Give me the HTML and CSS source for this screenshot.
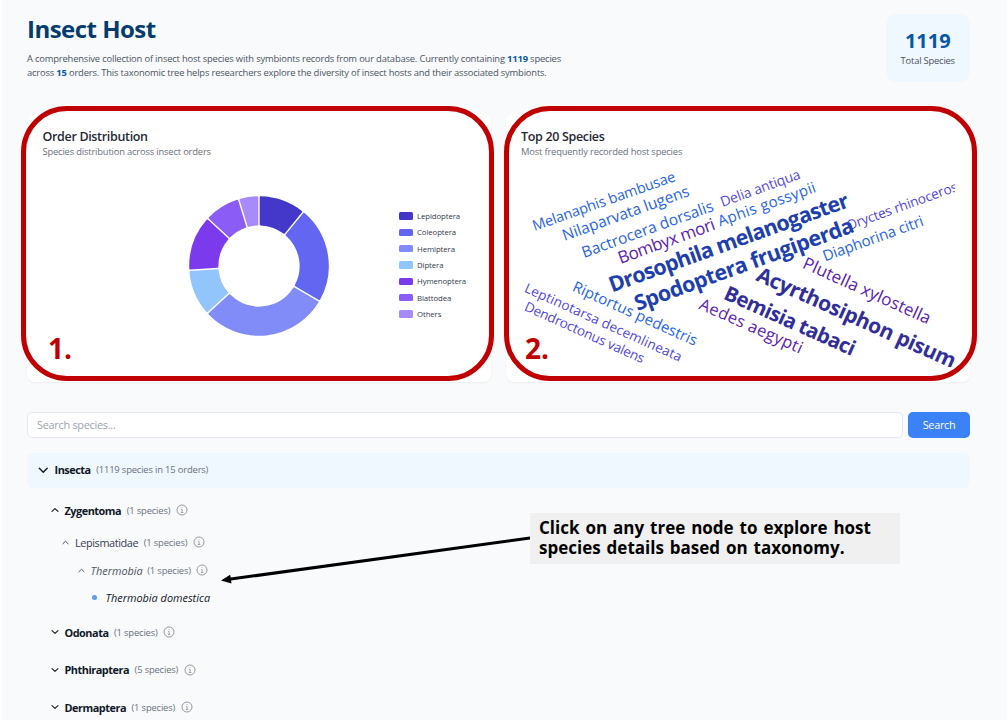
FILE: index.html
```html
<!DOCTYPE html>
<html lang="en">
<head>
<meta charset="utf-8">
<title>Insect Host</title>
<link rel="stylesheet" href="styles.css">
</head>
<body>
<svg class="defs" width="0" height="0">
  <symbol id="down" viewBox="0 0 12 12"><path d="M1.5 3.8 6 8.2l4.500-4.400" fill="none" stroke="currentColor" stroke-width="1.600" stroke-linecap="round" stroke-linejoin="round"/></symbol>
  <symbol id="up" viewBox="0 0 12 12"><path d="M1.5 8.200 6 3.800l4.500 4.400" fill="none" stroke="currentColor" stroke-width="1.600" stroke-linecap="round" stroke-linejoin="round"/></symbol>
  <symbol id="info" viewBox="0 0 12 12"><circle cx="6" cy="6" r="5" fill="none" stroke="currentColor" stroke-width=".9"/><path d="M5.200 5.300H6.100V8.500M4.900 8.500H7.300M5.700 3.500H6.400" fill="none" stroke="currentColor" stroke-width=".8"/></symbol>
</svg>
<main class="page">
  <header class="header">
    <div class="intro">
      <h1 class="title">Insect Host</h1>
      <p class="lead">A comprehensive collection of insect host species with symbionts records from our database. Currently containing <b>1119</b> species<br>across <b>15</b> orders. This taxonomic tree helps researchers explore the diversity of insect hosts and their associated symbionts.</p>
    </div>
    <div class="stat"><div class="stat-num">1119</div><div class="stat-label">Total Species</div></div>
  </header>

  <section class="cards">
    <article class="card">
      <h2 class="card-title">Order Distribution</h2>
      <p class="card-sub">Species distribution across insect orders</p>
      <div class="chart">
        <svg class="donut" id="donut" width="144" height="144" viewBox="-72 -72 144 144"></svg>
        <ul class="legend">
          <li><i class="c1"></i>Lepidoptera</li>
          <li><i class="c2"></i>Coleoptera</li>
          <li><i class="c3"></i>Hemiptera</li>
          <li><i class="c4"></i>Diptera</li>
          <li><i class="c5"></i>Hymenoptera</li>
          <li><i class="c6"></i>Blattodea</li>
          <li><i class="c7"></i>Others</li>
        </ul>
      </div>
    </article>
    <article class="card">
      <h2 class="card-title">Top 20 Species</h2>
      <p class="card-sub">Most frequently recorded host species</p>
      <svg class="cloud" width="434" height="205" viewBox="521.500 161.500 434 205">
        <g class="blue">
          <text transform="translate(535 230.500) rotate(-19.500)" font-size="14.500" textLength="150.500">Melanaphis bambusae</text>
          <text transform="translate(565 240.500) rotate(-19.900)" font-size="15.500" textLength="134">Nilaparvata lugens</text>
          <text transform="translate(584.500 257.500) rotate(-20)" font-size="15.500" textLength="139">Bactrocera dorsalis</text>
          <text transform="translate(720.500 226) rotate(-19.800)" font-size="15" textLength="103">Aphis gossypii</text>
          <text transform="translate(825.500 261) rotate(-20)" font-size="15" textLength="106">Diaphorina citri</text>
          <text transform="translate(572 290) rotate(24.300)" font-size="15" textLength="135">Riptortus pedestris</text>
        </g>
        <g class="indigo">
          <text transform="translate(723 206.500) rotate(-20)" font-size="14" textLength="84">Delia antiqua</text>
          <text transform="translate(849 230) rotate(-20)" font-size="13.500" textLength="117">Oryctes rhinoceros</text>
          <text transform="translate(524 291) rotate(24.300)" font-size="13.500" textLength="171">Leptinotarsa decemlineata</text>
          <text transform="translate(524 309.500) rotate(24.300)" font-size="13.500" textLength="130">Dendroctonus valens</text>
        </g>
        <g class="violet">
          <text transform="translate(621 263.500) rotate(-20)" font-size="17" textLength="102">Bombyx mori</text>
          <text transform="translate(802 267) rotate(24.300)" font-size="17" textLength="138.500">Plutella xylostella</text>
          <text transform="translate(698.500 308) rotate(24)" font-size="16.500" textLength="111.500">Aedes aegypti</text>
        </g>
        <g class="navy">
          <text transform="translate(612.500 292) rotate(-19.800)" font-size="21.500" textLength="253.500">Drosophila melanogaster</text>
          <text transform="translate(638 310.500) rotate(-20)" font-size="21.500" textLength="232">Spodoptera frugiperda</text>
        </g>
        <g class="deep">
          <text transform="translate(755.500 279.500) rotate(24.200)" font-size="21" textLength="216">Acyrthosiphon pisum</text>
          <text transform="translate(723 298) rotate(24)" font-size="20.500" textLength="141.500">Bemisia tabaci</text>
        </g>
      </svg>
    </article>
  </section>

  <form class="search"><input class="field" placeholder="Search species..."><button class="btn" type="button">Search</button></form>

  <section class="tree">
    <div class="row root"><svg class="chev"><use href="#down"/></svg><b>Insecta</b><span class="count">(1119 species in 15 orders)</span></div>
    <div class="row order zyg"><svg class="chev"><use href="#up"/></svg><b>Zygentoma</b><span class="count">(1 species)</span><svg class="info"><use href="#info"/></svg></div>
    <div class="row family"><svg class="chev"><use href="#up"/></svg><span class="name">Lepismatidae</span><span class="count">(1 species)</span><svg class="info"><use href="#info"/></svg></div>
    <div class="row genus"><svg class="chev"><use href="#up"/></svg><em>Thermobia</em><span class="count">(1 species)</span><svg class="info"><use href="#info"/></svg></div>
    <div class="row species"><i class="dot"></i><em>Thermobia domestica</em></div>
    <div class="row order first"><svg class="chev"><use href="#down"/></svg><b>Odonata</b><span class="count">(1 species)</span><svg class="info"><use href="#info"/></svg></div>
    <div class="row order"><svg class="chev"><use href="#down"/></svg><b>Phthiraptera</b><span class="count">(5 species)</span><svg class="info"><use href="#info"/></svg></div>
    <div class="row order"><svg class="chev"><use href="#down"/></svg><b>Dermaptera</b><span class="count">(1 species)</span><svg class="info"><use href="#info"/></svg></div>
  </section>
</main>

<div class="frame frame-1"><span class="mark">1.</span></div>
<div class="frame frame-2"><span class="mark">2.</span></div>
<svg class="arrow" width="312" height="56" viewBox="220 530 312 56"><path d="M530 538 229 579.300" stroke="#000" stroke-width="3"/><path d="M221 580.500 230.200 574.700 231.500 583.600Z"/></svg>
<div class="callout">Click on any tree node to explore host<br>species details based on taxonomy.</div>
<script src="donut.js"></script>
</body>
</html>
```

FILE: styles.css
```css
* { box-sizing: border-box; margin: 0; padding: 0; }
body { width: 1007px; height: 720px; overflow: hidden; position: relative; background: #fff; font-family: "Open Sans", "Noto Sans", sans-serif; color: #1f2937; }
.defs { position: absolute; }
.page { margin-left: 2px; height: 720px; overflow: hidden; background: #f9fafc; padding: 0 37px 0 25px; }

.header { display: flex; justify-content: space-between; height: 113px; }
.intro { padding-top: 11px; }
.title { font-size: 24px; line-height: 36px; font-weight: 700; letter-spacing: -.52px; color: #043c70; white-space: nowrap; }
.lead { margin-top: 5px; font-size: 9.400px; line-height: 14.300px; letter-spacing: -.175px; color: #4b5563; white-space: nowrap; }
.lead b { color: #075ba5; }
.stat { margin-top: 14px; width: 84.500px; height: 68px; border-radius: 9px; background: #eff7ff; text-align: center; padding-top: 14px; }
.stat-num { font-size: 20px; line-height: 26px; font-weight: 700; color: #0558a5; }
.stat-label { font-size: 9.400px; line-height: 13px; letter-spacing: -.2px; color: #4b5563; }

.cards { display: grid; grid-template-columns: 1fr 1fr; gap: 15px; height: 268.500px; }
.card { background: #fff; border-radius: 8px; padding: 15px 15px 0 15.500px; box-shadow: 0 1px 2px rgba(0,0,0,.05); }
.card-title { font-size: 12.500px; line-height: 17px; font-weight: 600; letter-spacing: -.33px; color: #1f2937; }
.card-sub { font-size: 9.400px; line-height: 14px; letter-spacing: -.18px; color: #6b7280; }
.chart { display: flex; justify-content: space-between; padding: 34.500px 0 0 144.300px; }
.donut { display: block; }
.legend { list-style: none; padding-top: 14.500px; width: 77px; }
.legend li { display: flex; align-items: center; gap: 4px; height: 16.300px; font-size: 7.800px; letter-spacing: -.1px; color: #333b4d; }
.legend i { width: 14.500px; height: 7.500px; border-radius: 1.500px; flex: none; }
.c1 { background: #4338ca; } .c2 { background: #6366f1; } .c3 { background: #818cf8; } .c4 { background: #93c5fd; }
.c5 { background: #7c3aed; } .c6 { background: #8b5cf6; } .c7 { background: #a78bfa; }
.cloud { display: block; margin-top: 3px; }
.blue { fill: #2563eb; } .indigo { fill: #4f46e5; } .violet { fill: #5b21b6; }
.navy { fill: #1e40af; font-weight: 700; } .deep { fill: #312e9b; font-weight: 700; }

.search { display: flex; gap: 5px; margin-top: 30px; height: 26.500px; }
.field { flex: 1; border: 1px solid #e5e7eb; border-radius: 5px; background: #fff; padding: 0 9px; font: 10.900px "Open Sans", sans-serif; letter-spacing: -.27px; }
.field::placeholder { color: #9ca3af; }
.btn { width: 62px; border: 0; border-radius: 5px; background: #3b82f6; color: #fff; font: 10.900px "Open Sans", sans-serif; letter-spacing: -.3px; }

.tree { margin-top: 15px; }
.row { display: flex; align-items: center; height: 37.600px; font-size: 10.900px; color: #111827; white-space: nowrap; }
.row b { font-weight: 700; letter-spacing: -.48px; }
.count { margin-left: 5.500px; font-size: 9.400px; letter-spacing: -.16px; color: #6b7280; }
.chev { flex: none; width: 8px; height: 8px; }
.info { flex: none; width: 12px; height: 12px; margin-left: 5.500px; color: #8a91a0; }
.root { height: 34.500px; padding: 0 0 1px 11px; border-radius: 5px; background: #eff7ff; }
.root .chev { width: 10.500px; height: 10.500px; margin-right: 6px; }
.order { padding-left: 23.500px; }
.order .chev { margin-right: 6px; }
.zyg { height: 36px; margin-top: 4.500px; }
.family { height: 28.500px; padding-left: 35px; color: #374151; }
.name { letter-spacing: -.4px; }
.family .chev { width: 7px; height: 7px; margin-right: 6px; }
.genus { height: 27px; padding-left: 50.500px; color: #4b5563; }
.genus .chev { width: 7px; height: 7px; margin-right: 6px; }
.genus .count { margin-left: 4.500px; }
.species { height: 27.500px; padding-left: 64.500px; }
.first { margin-top: 2.500px; }
.dot { width: 5.500px; height: 5.500px; border-radius: 50%; background: #5b9ff8; margin-right: 8.500px; }

.frame { position: absolute; top: 106px; width: 473px; height: 275px; border: 5px solid #c00000; border-radius: 46px; }
.frame-1 { left: 21px; } .frame-2 { left: 504px; }
.mark { position: absolute; left: 22px; bottom: 9px; font-size: 28px; line-height: 38px; font-weight: 700; color: #c00000; }
.frame-2 .mark { left: 16px; }
.arrow { position: absolute; left: 220px; top: 530px; }
.callout { position: absolute; left: 530px; top: 513px; width: 370px; height: 51px; background: #f0f0f0; padding: 5px 9px; font-size: 17px; line-height: 20px; font-weight: 700; word-spacing: 1.500px; color: #000; white-space: nowrap; }
```

FILE: donut.js
```js
// Ring chart: each slice is [start, end, colour], in degrees clockwise from the top.
const slices = [
  [0, 39.3, "#4338ca"], [39.3, 120.2, "#6366f1"], [120.2, 227.5, "#818cf8"],
  [227.5, 266.5, "#93c5fd"], [266.5, 312.8, "#7c3aed"], [312.8, 343, "#8b5cf6"], [343, 360, "#a78bfa"]
];
const outer = 68.8, inner = 41.6, gap = 1.7;
const at = (r, a) => (r * Math.sin(a)).toFixed(2) + " " + (-r * Math.cos(a)).toFixed(2);
document.getElementById("donut").innerHTML = slices.map(([s, e, c]) => {
  const a = s * Math.PI / 180, b = e * Math.PI / 180;
  const o = Math.asin(gap / outer), i = Math.asin(gap / inner);
  return `<path d="M${at(outer, a + o)}A${outer} ${outer} 0 0 1 ${at(outer, b - o)}L${at(inner, b - i)}A${inner} ${inner} 0 0 0 ${at(inner, a + i)}Z" fill="${c}" stroke="${c}" stroke-width="2" stroke-linejoin="round"/>`;
}).join("");
```
